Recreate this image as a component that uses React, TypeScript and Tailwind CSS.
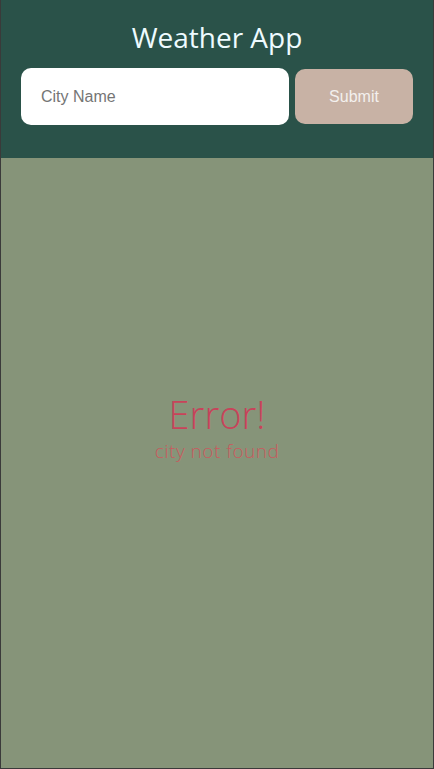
export default function App() {
  return (
    <div className="w-full h-[769px] flex flex-col border-x border-b border-[#3a3a3a] bg-[#869479]">
      <header className="h-[158px] bg-[#2a5249] px-5 pt-[18px] flex flex-col items-center">
        <h1 className="text-[28px] leading-[38px] text-[#eefbff] font-normal font-['Open_Sans',sans-serif]">
          Weather App
        </h1>
        <div className="mt-[12px] w-full flex gap-[6px] font-['Liberation_Sans',Arial,sans-serif]">
          <input
            placeholder="City Name"
            className="w-[268px] h-[57px] rounded-[10px] bg-white px-5 text-[16px] text-[#333] placeholder:text-[#757575] outline-none"
          />
          <button className="flex-1 h-[55px] mt-px rounded-[10px] bg-[#c8b2a5] text-[#f3f0ee] text-[16px]">
            Submit
          </button>
        </div>
      </header>
      <main className="flex-1 flex flex-col items-center justify-center pb-[70px] font-['Open_Sans',sans-serif]">
        <div className="text-[38px] leading-[40px] font-light text-[#c8435a]">Error!</div>
        <div className="mt-[5px] text-[19px] leading-[24px] font-light tracking-[0.5px] text-[#c85a5e]">city not found</div>
      </main>
    </div>
  );
}
